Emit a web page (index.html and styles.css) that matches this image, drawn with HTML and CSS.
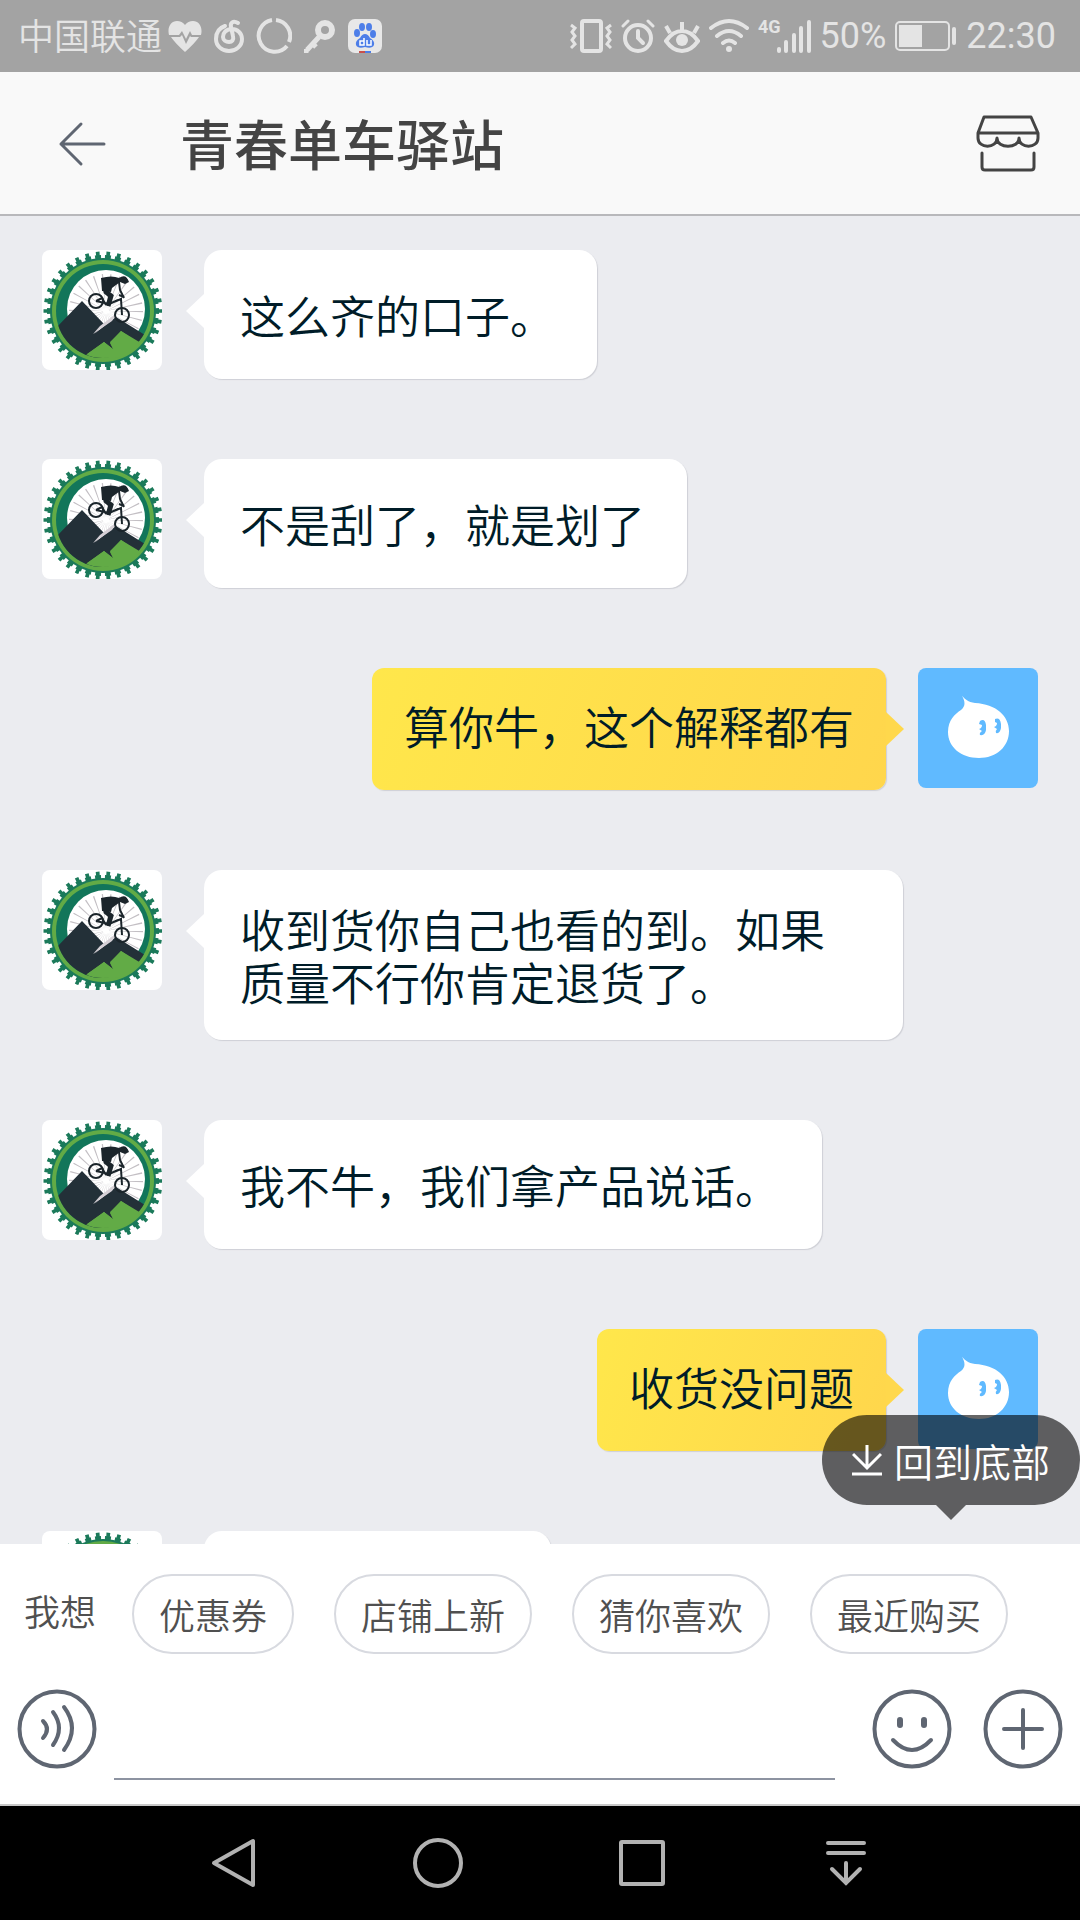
FILE: index.html
```html
<!DOCTYPE html>
<html lang="zh-CN">
<head>
    <meta charset="UTF-8">
    <meta name="viewport" content="width=device-width, initial-scale=1.0">
    <title>青春单车驿站</title>
    <link rel="stylesheet" href="styles.css">
</head>
<body>
    <!-- shared avatars -->
    <svg class="sprite" width="0" height="0">
        <symbol id="shop-avatar" viewBox="0 0 120 120">
            <rect width="120" height="120" fill="#fff"/>
            <circle cx="61" cy="61" r="54" fill="none" stroke="#1b7a5a" stroke-width="4" pathLength="68" stroke-dasharray="1.2 .8" stroke-dashoffset=".6"/>
            <circle cx="61" cy="61" r="57" fill="none" stroke="#1b7a5a" stroke-width="5" pathLength="68" stroke-dasharray=".7 1.3" stroke-dashoffset=".35"/>
            <circle cx="61" cy="61" r="53" fill="#1b7a5a"/>
            <circle cx="61" cy="61" r="51" fill="#62ab46"/>
            <circle cx="61" cy="61" r="47" fill="#12765a"/>
            <clipPath id="disc"><circle cx="61" cy="61" r="47"/></clipPath>
            <circle cx="64" cy="59" r="39" fill="#fff"/>
            <circle cx="64" cy="61" r="20" fill="none" stroke="#c3bfc4" stroke-width="34" pathLength="26" stroke-dasharray=".15 .85"/>
            <g clip-path="url(#disc)">
                <path d="M12 80L40 51L62 74L52 84L74 67L103 85L110 120H12z" fill="#233038"/>
                <path d="M51 84L58 76L76 62L70 71z" fill="#d6d0d6"/>
                <path d="M40 108L62 92L71 99L68 93L79 81L98 94L112 90V120H40z" fill="#62ab46"/>
            </g>
            <path d="M45 104L62 92L72 100L68 92L79 81L99 93Q82 116 45 104z" fill="#62ab46"/>
            <g fill="none" stroke="#1b252b">
                <circle cx="54" cy="51" r="7" stroke-width="2"/>
                <circle cx="80" cy="65" r="7" stroke-width="2"/>
                <path d="M54 51L67 54L79 49L80 65M54 51L60 48L64 55M65 55L76 50M77 45L82 47" stroke-width="2"/>
                <path d="M63 36L64 42L69 46L66 56" stroke-width="5"/>
                <path d="M77 32L78 40L82 48" stroke-width="2"/>
            </g>
            <path d="M59 28Q70 25 77 28Q84 23 87 32L83 34L78 32L70 38L69 42L60 41z" fill="#1b252b"/>
        </symbol>
        <symbol id="my-avatar" viewBox="0 0 120 120">
            <rect width="120" height="120" fill="#60baff"/>
            <path d="M44 28C47 31 50 34 57 35C78 36 91 48 91 63C91 79 78 90 61 90C43 90 30 79 30 64C30 52 37 46 43 42C48 38 47 33 44 28z" fill="#fff"/>
            <path d="M62 53Q67 50 68 57V62Q67 68 62 67Q61 65 64 63L61 61Q64 60 64 57L61 56zM77 51Q82 49 83 56V60Q82 66 78 65Q77 63 79 61L76 59Q79 58 79 55L77 54z" fill="#60baff"/>
        </symbol>
    </svg>

    <div class="page">
        <div class="status-bar">
            <span class="carrier">中国联通</span>
            <div class="status-left">
                <svg width="34" height="34" viewBox="0 0 34 34" fill="#e4e4e4">
                    <path d="M1 16C-1 8 3 2 9 2Q14 2 17 6Q20 2 25 2C31 2 35 8 33 16H24L22 12L18 20L14 12L11 16zM3 18H12L14 16L18 25L22 17L23 18H31Q27 24 17 33Q7 24 3 18z"/>
                </svg>
                <svg width="30" height="36" viewBox="0 0 30 36" fill="none" stroke="#e4e4e4" stroke-width="4" stroke-linecap="round">
                    <path d="M11 8C5 10 2 15 2 21C2 28 8 33 15 33C22 33 28 28 28 21C28 15 23 11 18 11C12 11 9 15 9 19C9 22 12 24 15 24C18 24 20 22 19 18L17 9C16 5 19 2 24 5"/>
                </svg>
                <svg width="36" height="36" viewBox="0 0 36 36" fill="none" stroke="#e4e4e4" stroke-width="4">
                    <path d="M20 2A16 16 0 0 1 33 24M31 28A16 16 0 1 1 16 2"/>
                </svg>
                <svg width="32" height="36" viewBox="0 0 32 36" fill="none" stroke="#e4e4e4">
                    <circle cx="21" cy="12" r="7" stroke-width="6"/>
                    <path d="M15 19L3 32M9 26L12 29M2 31V35" stroke-width="5"/>
                </svg>
                <svg width="34" height="34" viewBox="0 0 34 34">
                    <rect width="34" height="34" rx="7" fill="#e8e8e8"/>
                    <g fill="#4d7ee8">
                        <ellipse cx="9" cy="14" rx="3" ry="4"/>
                        <ellipse cx="14" cy="8" rx="3" ry="4"/>
                        <ellipse cx="21" cy="8" rx="3" ry="4"/>
                        <ellipse cx="25" cy="15" rx="3" ry="4"/>
                        <path d="M17 15Q20 15 22 19Q27 22 26 26Q24 30 17 28Q10 30 8 26Q7 22 12 19Q14 15 17 15z"/>
                        <path d="M17 32H23V34H17z"/>
                    </g>
                    <path d="M11 32H17V34H11z" fill="#c9504a"/>
                    <path d="M16 19V26H12V22H16M19 21V26H23V21" fill="none" stroke="#fff" stroke-width="1.5"/>
                </svg>
            </div>
            <div class="status-right">
                <svg width="42" height="36" viewBox="0 0 42 36" fill="none" stroke="#e4e4e4">
                    <rect x="12" y="3" width="19" height="30" rx="2" stroke-width="4"/>
                    <path d="M1 7L5 10L2 14L5 18L2 22L5 26L1 30M41 7L37 10L40 14L37 18L40 22L37 26L41 30" stroke-width="3"/>
                </svg>
                <svg width="34" height="36" viewBox="0 0 34 36" fill="none" stroke="#e4e4e4" stroke-linecap="round">
                    <circle cx="17" cy="20" r="13" stroke-width="4"/>
                    <path d="M17 13V20L22 25" stroke-width="4"/>
                    <path d="M2 8L7 3M32 8L27 3" stroke-width="3"/>
                </svg>
                <svg width="36" height="36" viewBox="0 0 36 36" fill="none" stroke="#e4e4e4">
                    <path d="M2 23Q9 13 18 13Q27 13 34 23Q27 33 18 33Q9 33 2 23zM18 12V4M6 15L2 8M30 15L34 8" stroke-width="4"/>
                    <circle cx="18" cy="22" r="6" fill="#e4e4e4" stroke="none"/>
                </svg>
                <svg width="40" height="36" viewBox="0 0 40 36" fill="none" stroke="#e4e4e4" stroke-width="4" stroke-linecap="round">
                    <path d="M2 10Q20-4 38 10M8 18Q20 8 32 18M14 25Q20 20 26 25"/>
                    <circle cx="20" cy="31" r="3" fill="#e4e4e4" stroke="none"/>
                </svg>
                <div class="signal">
                    <span>4G</span>
                    <svg width="34" height="36" viewBox="0 0 34 36" stroke="#e4e4e4" stroke-width="4" stroke-linecap="round">
                        <path d="M2 31V33M9 24V33M17 17V33M24 10V33M32 4V33"/>
                    </svg>
                </div>
                <span class="percent">50%</span>
                <svg width="62" height="30" viewBox="0 0 62 30">
                    <rect x="1" y="1" width="53" height="28" rx="4" fill="none" stroke="#e4e4e4" stroke-width="2"/>
                    <path d="M4 4H27V26H4z" fill="#e4e4e4"/>
                    <rect x="57" y="6" width="4" height="18" rx="2" fill="#e4e4e4"/>
                </svg>
                <span class="clock">22:30</span>
            </div>
        </div>

        <div class="header">
            <button type="button" class="icon-btn back-btn" aria-label="返回">
                <svg width="48" height="48" viewBox="0 0 48 48" fill="none" stroke="#5f6672" stroke-width="3" stroke-linecap="round" stroke-linejoin="round">
                    <path d="M46 24H3M23 4L3 24L23 44"/>
                </svg>
            </button>
            <h1>青春单车驿站</h1>
            <button type="button" class="icon-btn" aria-label="店铺">
                <svg width="64" height="58" viewBox="0 0 64 58" fill="none" stroke="#444" stroke-width="3" stroke-linecap="round" stroke-linejoin="round">
                    <path d="M2 18L8 2H55L62 18zM2 18V23C2 34 21 34 21 23C21 34 43 34 43 23C43 34 62 34 62 23V18M6 38V52Q6 55 9 55H55Q58 55 58 52V38"/>
                </svg>
            </button>
        </div>

        <div class="chat">
            <div class="message">
                <svg class="avatar"><use href="#shop-avatar"/></svg>
                <div class="bubble">这么齐的口子。</div>
            </div>
            <div class="message">
                <svg class="avatar"><use href="#shop-avatar"/></svg>
                <div class="bubble">不是刮了，就是划了</div>
            </div>
            <div class="message sent">
                <svg class="avatar"><use href="#my-avatar"/></svg>
                <div class="bubble">算你牛，这个解释都有</div>
            </div>
            <div class="message">
                <svg class="avatar"><use href="#shop-avatar"/></svg>
                <div class="bubble">收到货你自己也看的到。如果质量不行你肯定退货了。</div>
            </div>
            <div class="message">
                <svg class="avatar"><use href="#shop-avatar"/></svg>
                <div class="bubble">我不牛，我们拿产品说话。</div>
            </div>
            <div class="message sent">
                <svg class="avatar"><use href="#my-avatar"/></svg>
                <div class="bubble">收货没问题</div>
            </div>
            <div class="message">
                <svg class="avatar"><use href="#shop-avatar"/></svg>
                <div class="bubble short"></div>
            </div>
        </div>

        <div class="footer">
            <button type="button" class="to-bottom">
                <svg width="30" height="32" viewBox="0 0 30 32" fill="none" stroke="#fff" stroke-width="3">
                    <path d="M15 1V24M1 10L15 24L29 10M0 30H30"/>
                </svg>
                回到底部
            </button>
            <div class="quick">
                <span class="quick-label">我想</span>
                <button type="button" class="chip">优惠券</button>
                <button type="button" class="chip">店铺上新</button>
                <button type="button" class="chip">猜你喜欢</button>
                <button type="button" class="chip">最近购买</button>
            </div>
            <form class="input-row">
                <button type="button" class="icon-btn" aria-label="语音">
                    <svg width="80" height="80" viewBox="0 0 80 80" fill="none" stroke="#5f6672" stroke-width="4" stroke-linecap="round">
                        <circle cx="40" cy="40" r="37.5"/>
                        <path d="M26 32Q34 40 26 49M36 23Q48 39 36 56M47 18Q63 39 47 61"/>
                    </svg>
                </button>
                <input type="text" class="message-input" aria-label="输入消息">
                <button type="button" class="icon-btn" aria-label="表情">
                    <svg width="80" height="80" viewBox="0 0 80 80" fill="none" stroke="#5f6672" stroke-width="4" stroke-linecap="round">
                        <circle cx="40" cy="40" r="37.5"/>
                        <path d="M21 51Q40 71 59 51"/>
                        <path d="M28 31V36M52 31V36" stroke-width="6"/>
                    </svg>
                </button>
                <button type="button" class="icon-btn" aria-label="更多">
                    <svg width="80" height="80" viewBox="0 0 80 80" fill="none" stroke="#5f6672" stroke-width="4" stroke-linecap="round">
                        <circle cx="40" cy="40" r="37.5"/>
                        <path d="M40 21V59M21 40H59"/>
                    </svg>
                </button>
            </form>
        </div>

        <div class="nav-bar">
            <button type="button" class="icon-btn" aria-label="后退">
                <svg width="50" height="50" viewBox="0 0 50 50" fill="none" stroke="#b2b2b2" stroke-width="4" stroke-linejoin="round">
                    <path d="M44 3V47L5 25z"/>
                </svg>
            </button>
            <button type="button" class="icon-btn" aria-label="主页">
                <svg width="50" height="50" viewBox="0 0 50 50" fill="none" stroke="#b2b2b2" stroke-width="4">
                    <circle cx="25" cy="25" r="23"/>
                </svg>
            </button>
            <button type="button" class="icon-btn" aria-label="最近任务">
                <svg width="50" height="50" viewBox="0 0 50 50" fill="none" stroke="#b2b2b2" stroke-width="4">
                    <rect x="4" y="4" width="42" height="42" rx="1"/>
                </svg>
            </button>
            <button type="button" class="icon-btn" aria-label="通知栏">
                <svg width="50" height="50" viewBox="0 0 50 50" fill="none" stroke="#b2b2b2" stroke-width="4" stroke-linecap="round">
                    <path d="M7 5H43M7 15H43M25 25V45M11 31L25 45L39 31"/>
                </svg>
            </button>
        </div>
    </div>
</body>
</html>
```

FILE: styles.css
```css
* {
    box-sizing: border-box;
}

body {
    margin: 0;
    font-family: Roboto, "Noto Sans CJK SC", sans-serif;
    background: #ebecf0;
}

button {
    font-family: inherit;
    cursor: pointer;
}

svg {
    display: block;
    flex-shrink: 0;
}

.sprite {
    position: absolute;
}

.page {
    display: flex;
    flex-direction: column;
    height: 100vh;
}

.icon-btn {
    padding: 0;
    border: none;
    background: none;
}

/* status bar */
.status-bar {
    display: flex;
    align-items: center;
    height: 72px;
    padding: 0 24px 0 18px;
    background: #a3a3a3;
    color: #e4e4e4;
    font-size: 36px;
    line-height: 72px;
    white-space: nowrap;
}

.carrier {
    padding-top: 4px;
    font-weight: 350;
    line-height: 68px;
}

.status-left {
    display: flex;
    align-items: center;
    gap: 12px;
    margin-left: 6px;
}

.status-right {
    display: flex;
    align-items: center;
    gap: 9px;
    margin-left: auto;
}

.signal {
    display: flex;
}

.signal span {
    margin-right: -4px;
    font-size: 18px;
    font-weight: 700;
    line-height: 18px;
}

/* header */
.header {
    display: flex;
    align-items: center;
    height: 144px;
    padding: 2px 40px 0 58px;
    background: #f9f9f9;
    border-bottom: 2px solid #b8b8bb;
}

.header h1 {
    flex: 1;
    margin: 0;
    padding: 8px 0 0 74px;
    color: #444;
    font-size: 54px;
    font-weight: 500;
    line-height: 72px;
}

/* messages */
.chat {
    flex: 1;
    display: flex;
    flex-direction: column;
    gap: 80px;
    min-height: 0;
    padding: 34px 42px 0;
    overflow: hidden;
}

.message {
    display: flex;
    flex-shrink: 0;
    align-items: flex-start;
    gap: 42px;
}

.avatar {
    width: 120px;
    height: 120px;
    border-radius: 8px;
}

.bubble {
    position: relative;
    display: grid;
    align-content: center;
    max-width: 699px;
    min-height: 129px;
    padding: 36px 42px 28px 36px;
    border-radius: 18px;
    background: #fff;
    box-shadow: 1px 1px 1px #cfd0d6;
    color: #001c28;
    font-size: 45px;
    font-weight: 350;
    line-height: 53px;
}

.bubble::before {
    content: "";
    position: absolute;
    top: 44px;
    left: -18px;
    width: 18px;
    height: 34px;
    background: inherit;
    clip-path: polygon(100% 0, 0 50%, 100% 100%);
}

.sent {
    flex-direction: row-reverse;
    gap: 32px;
}

.sent .bubble {
    min-height: 122px;
    padding: 34px 32px;
    border-radius: 12px;
    background: linear-gradient(110deg, #ffe74b, #ffd64c);
}

.sent .bubble::before {
    left: 100%;
    background: #ffd84c;
    clip-path: polygon(0 0, 100% 50%, 0 100%);
}

.bubble.short {
    width: 347px;
}

/* footer */
.footer {
    position: relative;
    padding-top: 30px;
    background: #fff;
    border-bottom: 2px solid #c8c8c8;
}

.to-bottom {
    position: absolute;
    right: 0;
    bottom: calc(100% + 39px);
    display: flex;
    align-items: center;
    gap: 12px;
    height: 90px;
    padding: 0 30px;
    border: none;
    border-radius: 45px;
    background: rgba(0, 0, 0, 0.6);
    color: #fff;
    font-size: 39px;
    font-weight: 350;
    white-space: nowrap;
}

.to-bottom::after {
    content: "";
    position: absolute;
    top: 100%;
    left: 50%;
    margin-left: -15px;
    border: 15px solid transparent;
    border-top-color: rgba(0, 0, 0, 0.6);
    border-bottom: none;
}

.quick {
    display: flex;
    align-items: center;
    gap: 40px;
    padding: 0 24px;
    color: #505050;
    font-size: 36px;
    font-weight: 350;
    white-space: nowrap;
}

.quick-label {
    margin-right: -4px;
    padding-bottom: 8px;
}

.chip {
    height: 80px;
    padding: 0 25px;
    border: 2px solid #d8dae0;
    border-radius: 40px;
    background: #fff;
    color: inherit;
    font-size: 36px;
    font-weight: 350;
}

.input-row {
    display: flex;
    gap: 31px;
    padding: 35px 17px 24px;
}

.input-row .icon-btn {
    height: 80px;
}

.message-input {
    flex: 1;
    min-width: 0;
    height: 91px;
    margin: 0 6px 0 -14px;
    padding: 0 12px;
    border: none;
    border-bottom: 2px solid #8d93a1;
    outline: none;
    background: transparent;
    font-family: inherit;
    font-size: 45px;
}

/* system navigation */
.nav-bar {
    display: grid;
    grid-template-columns: repeat(4, 1fr);
    justify-items: center;
    align-items: center;
    height: 114px;
    padding: 0 132px;
    background: #000;
}
```
